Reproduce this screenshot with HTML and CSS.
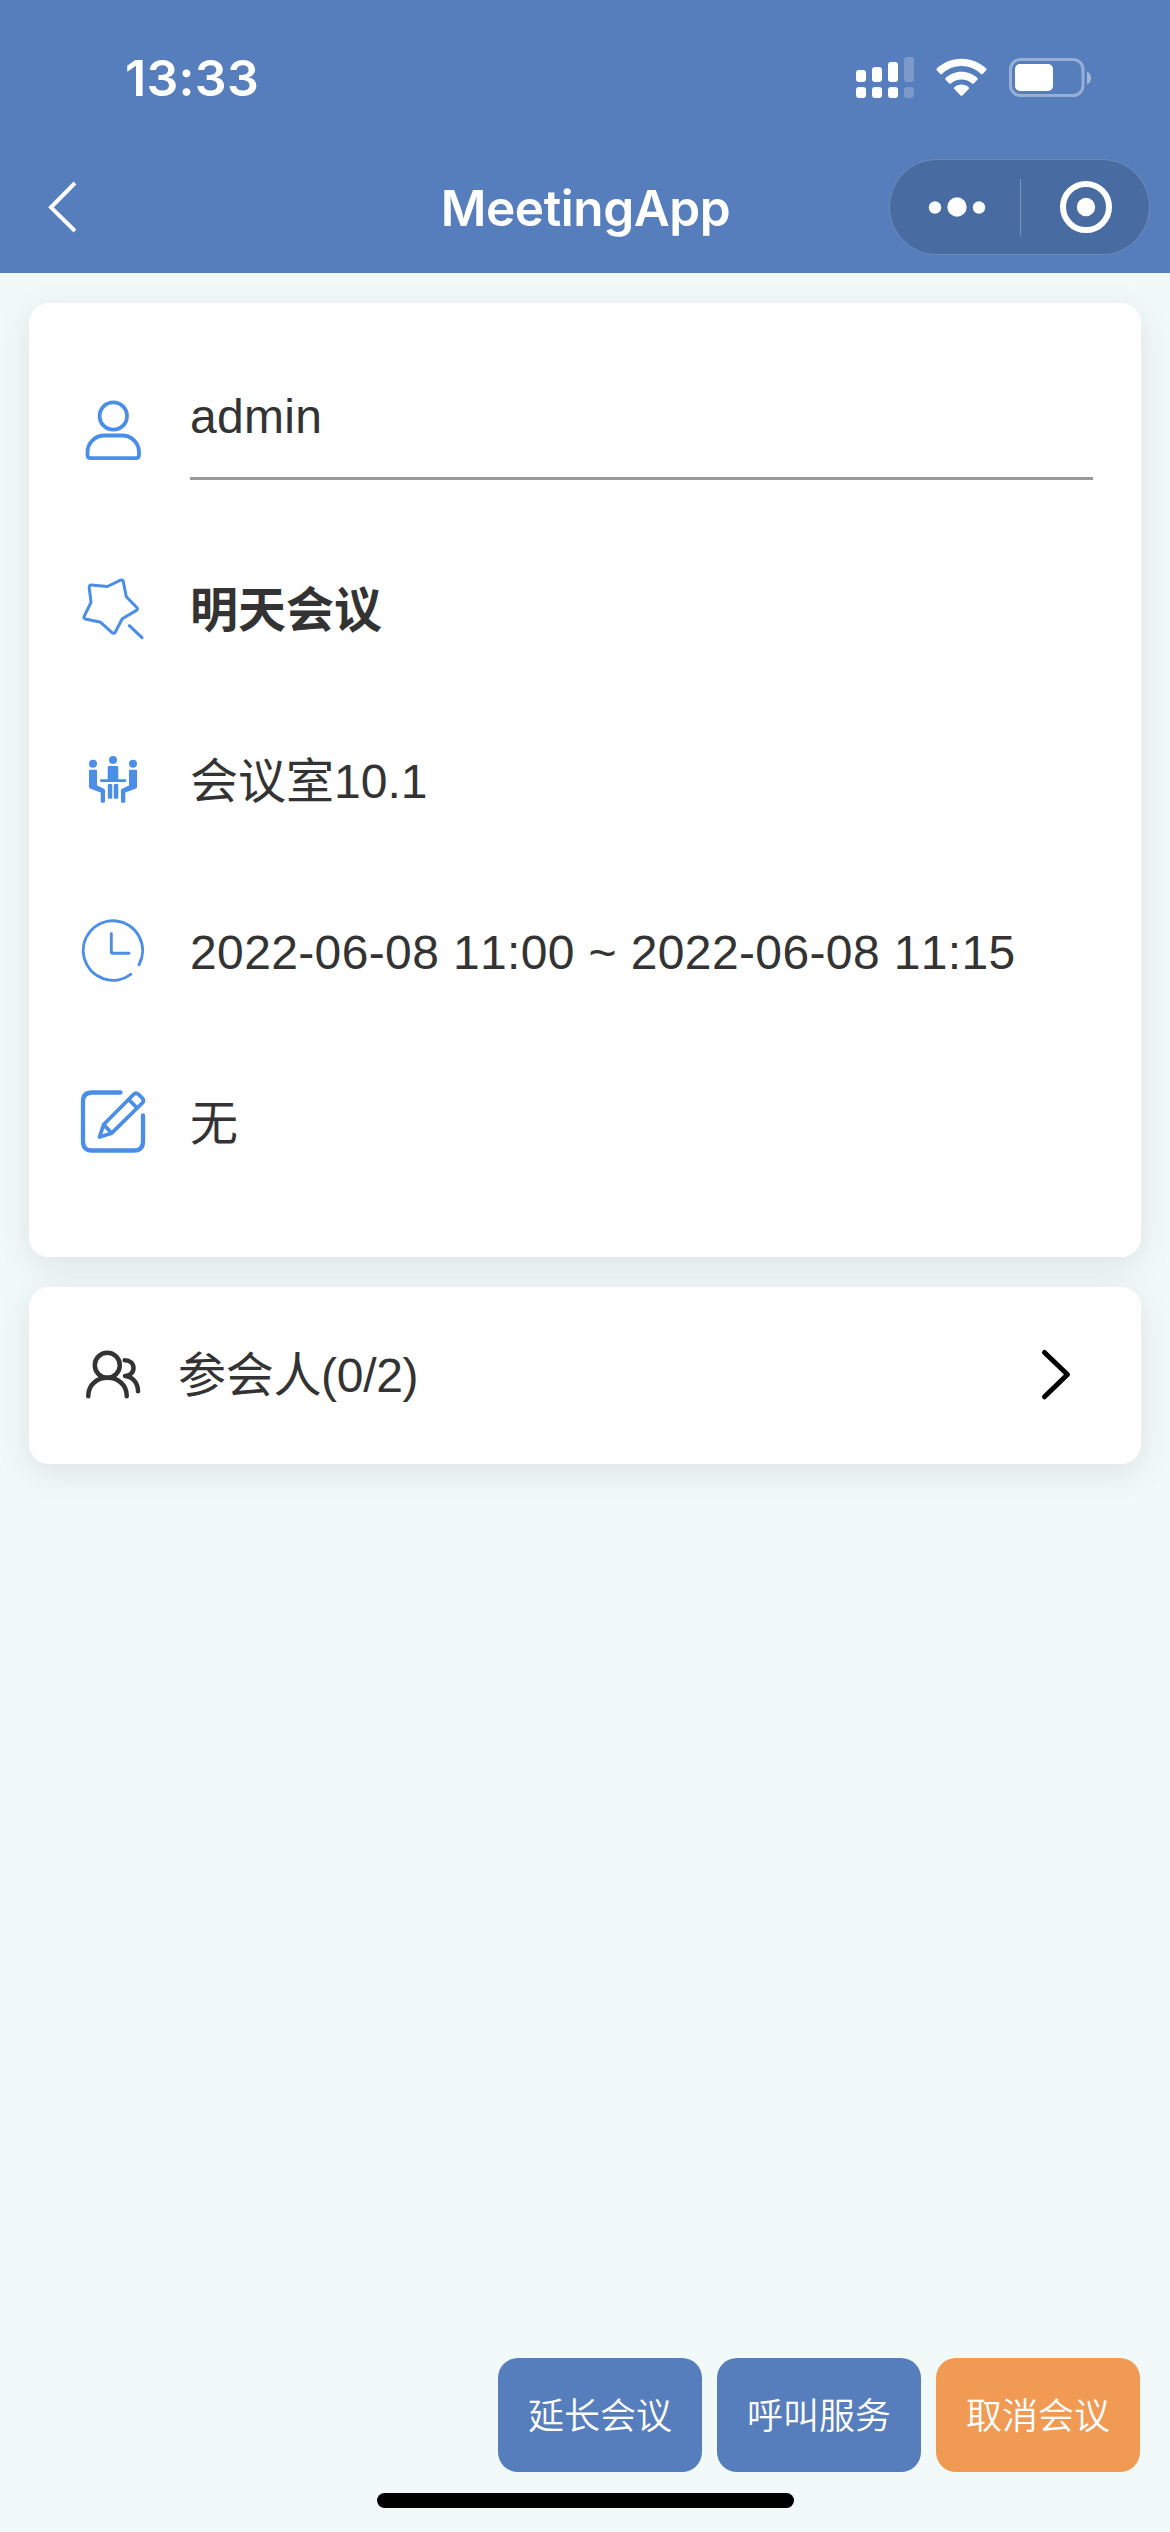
FILE: index.html
```html
<!DOCTYPE html>
<html lang="zh-CN">
<head>
<meta charset="utf-8">
<title>MeetingApp</title>
<link rel="stylesheet" href="styles.css">
</head>
<body>
<div class="screen">
  <header class="header">
    <div class="status">
      <span class="time">13:33</span>
      <svg class="status-icons" width="236" height="48" viewBox="856 54 236 48" fill="#fff">
        <rect x="856" y="70" width="10" height="12" rx="3"/>
        <rect x="872" y="67" width="10" height="15" rx="3"/>
        <rect x="888" y="62" width="10" height="20" rx="3"/>
        <rect x="904" y="57" width="10" height="25" rx="3" opacity=".22"/>
        <rect x="856" y="87" width="10" height="11" rx="3"/>
        <rect x="872" y="87" width="10" height="11" rx="3"/>
        <rect x="888" y="87" width="10" height="11" rx="3"/>
        <rect x="904" y="87" width="10" height="11" rx="3" opacity=".22"/>
        <path d="M961.5 58.7c9.500 0 18.200 3.700 24.700 9.700q.9.900 0 1.900l-3.300 3.500q-1 1-2 .1c-5.200-4.900-12-7.800-19.400-7.800s-14.200 2.900-19.400 7.800q-1 .9-2-.1l-3.300-3.500q-.9-1 0-1.900c6.500-6 15.200-9.700 24.700-9.700z"/>
        <path d="M961.500 71.700c6.100 0 11.700 2.400 15.900 6.200q.9.900 0 1.900l-3.400 3.500q-1 1-2 .1c-2.800-2.500-6.500-4-10.500-4s-7.700 1.500-10.500 4q-1 .9-2-.1l-3.400-3.500q-.9-1 0-1.900c4.200-3.800 9.800-6.200 15.900-6.200z"/>
        <path d="M961.500 84.500c2.800 0 5.300 1 7.200 2.700q.9.900 0 1.900l-6.300 6.400q-.9.900-1.800 0l-6.300-6.400q-.9-1 0-1.900c1.900-1.700 4.400-2.700 7.200-2.700z"/>
        <rect x="1010.500" y="59.500" width="72.500" height="36" rx="10" fill="none" stroke="#fff" stroke-width="3" opacity=".38"/>
        <rect x="1015" y="64" width="38" height="27" rx="5"/>
        <path d="M1087 71.500q4 2 4 6.500t-4 6.500z" opacity=".45"/>
      </svg>
    </div>
    <nav class="nav">
      <svg class="back" width="40" height="60" viewBox="42 177 40 60" fill="none" stroke="#fff" stroke-width="4"><path d="M75 183 51 207.300 75 231"/></svg>
      <h1 class="title">MeetingApp</h1>
      <div class="capsule">
        <svg class="dots" width="58" height="24" viewBox="0 0 58 24" fill="#fff"><circle cx="7" cy="12.500" r="6.200"/><circle cx="29" cy="12" r="9.700"/><circle cx="51" cy="12.500" r="6.200"/></svg>
        <span class="divider"></span>
        <svg class="ring" width="54" height="54" viewBox="0 0 54 54"><circle cx="27" cy="27" r="23" fill="none" stroke="#fff" stroke-width="6"/><circle cx="27" cy="27" r="9.200" fill="#fff"/></svg>
      </div>
    </nav>
  </header>

  <main class="content">
    <section class="card details">
      <div class="row">
        <svg class="icon" viewBox="0 0 80 80" stroke-width="3.800"><circle cx="40.300" cy="17" r="13.700"/><path d="M31.500 36.500H49C58.500 36.500 66 44 66 53.500V56q0 3.200-3.200 3.200H17.700q-3.200 0-3.200-3.200V53.500C14.500 44 22 36.500 31.500 36.500z"/></svg>
        <div class="field">admin</div>
      </div>
      <div class="row">
        <svg class="icon" viewBox="0 0 80 80" stroke-width="3"><path d="M18.500 15.100 34.300 16.500 47.600 10.200Q49.800 9.300 50.300 11.600L53.300 26.700 63.800 37.500Q65.400 39.200 63.400 40.400L49.300 48.700 42.300 62Q41 64.300 39 62.700L27.700 52.300 12.500 49Q10.300 48.300 11.200 46.300L18 32.300 16.200 17.500Q16.100 14.900 18.500 15.100zM56.300 55.700 69 67.700"/></svg>
        <div class="value strong">明天会议</div>
      </div>
      <div class="row">
        <svg class="icon solid" viewBox="0 0 80 80">
          <circle cx="20" cy="22.700" r="4"/><circle cx="40" cy="19" r="4"/><circle cx="60" cy="22.700" r="4"/>
          <path d="M17 28.800h6q1 0 1 1V44.500l7 3.200q1 .5 1 1.600V60.500q0 1.300-1.300 1.300h-1.700q-1.300 0-1.300-1.300V51.500L17 47.400q-1-.4-1-1.400V29.800q0-1 1-1z"/>
          <path d="M63 28.800h-6q-1 0-1 1V44.500l-7 3.200q-1 .5-1 1.600V60.500q0 1.300 1.300 1.300h1.700q1.300 0 1.300-1.300V51.500L63 47.400q1-.4 1-1.400V29.800q0-1-1-1z"/>
          <path d="M36 25h8q1.300 0 1.300 1.300V38.200h7q1 0 1 1.400t-1 1.400H28q-1 0-1-1.400t1-1.400h6.700V26.300q0-1.300 1.300-1.300z"/>
          <rect x="34.800" y="43" width="4.500" height="14.700" rx="1"/><rect x="40.800" y="43" width="4.500" height="14.700" rx="1"/>
        </svg>
        <div class="value">会议室10.1</div>
      </div>
      <div class="row">
        <svg class="icon" viewBox="0 0 80 80" stroke-width="2.900"><path d="M57.700 62.300A29.700 29.700 0 1 1 66 52.700M38.300 21.700V40.300q0 1 1 1H56"/></svg>
        <div class="value time-range">2022-06-08 11:00 ~ 2022-06-08 11:15</div>
      </div>
      <div class="row">
        <svg class="icon" viewBox="0 0 80 80" stroke-width="4.300"><path d="M47.500 9.500H19Q10 9.500 10 18.500V58.500Q10 67.500 19 67.500H61Q70 67.500 70 58.500V32.500"/><path stroke-width="3.800" d="M26.500 54 30.700 41.500 60.500 11.500Q63 9 65.500 11.300L69.300 15Q71.600 17.500 69.300 20L38.700 50.200zM30.700 41.500 38.700 50.200M55.700 16.500 64 24.800"/></svg>
        <div class="value">无</div>
      </div>
    </section>

    <section class="card people">
      <svg class="icon dark" viewBox="0 0 80 80" stroke-width="4.500"><circle cx="34.300" cy="29.300" r="12.500"/><path d="M15.300 60.300V59.500C15.300 49 23.800 41.800 34.500 41.800S53.700 49 53.700 59.500V60.300"/><path d="M51.700 24.200C57 24.200 60.500 27.500 60.500 32S57 40 52 40C60 40.800 65 47 65 55.300"/></svg>
      <span class="people-label">参会人(0/2)</span>
      <svg class="chevron" width="36" height="56" viewBox="1038 1347.500 36 56" fill="none" stroke="#000" stroke-width="5" stroke-linecap="round" stroke-linejoin="round"><path d="M1044.500 1352 1067.500 1374 1044.500 1396.300"/></svg>
    </section>
  </main>

  <footer class="footer">
    <div class="actions">
      <button class="btn">延长会议</button>
      <button class="btn">呼叫服务</button>
      <button class="btn warn">取消会议</button>
    </div>
    <div class="home"></div>
  </footer>
</div>
</body>
</html>
```
FILE: styles.css
```css
* { box-sizing: border-box; }
body {
  margin: 0;
  background: #f2faf9;
  color: #333;
  font-family: "Liberation Sans", "Noto Sans CJK SC", sans-serif;
}
.screen {
  width: 1170px;
  height: 2532px;
  display: flex;
  flex-direction: column;
}
.header {
  height: 273px;
  background: #577ebc;
  color: #fff;
  font-family: Inter, sans-serif;
}
.status {
  height: 156px;
  padding: 0 78px 0 125px;
  display: flex;
  align-items: center;
  justify-content: space-between;
}
.time { font-size: 50px; font-weight: 600; line-height: 60px; letter-spacing: .3px; }
.nav {
  height: 102px;
  padding: 0 20px 0 42px;
  display: grid;
  grid-template-columns: 261px 1fr 261px;
  align-items: center;
}
.title {
  margin: 0;
  font-size: 49.5px;
  font-weight: 600;
  line-height: 60px;
  letter-spacing: -.4px;
  text-align: center;
  padding: 1px 21px 0 0;
}
.capsule {
  height: 96px;
  border: 1px solid rgba(255, 255, 255, .2);
  border-radius: 48px;
  background: #486ca1;
  display: flex;
  align-items: center;
  padding: 0 36px 0 38px;
  justify-content: space-between;
}
.divider { width: 1px; height: 57px; background: rgba(255, 255, 255, .28); margin-left: -4px; }
.content {
  flex: 1;
  padding: 30px 29px;
  display: flex;
  flex-direction: column;
  gap: 30px;
}
.card {
  background: #fff;
  border-radius: 20px;
  box-shadow: 0 9px 36px rgba(0, 0, 0, .09);
}
.details { height: 954px; padding: 50px 48px 0 44px; }
.row {
  height: 171px;
  display: flex;
  align-items: center;
  gap: 37px;
  font-size: 48px;
  line-height: 72px;
}
.icon {
  width: 80px;
  height: 80px;
  flex: none;
  fill: none;
  stroke: #4a8ee8;
  stroke-linecap: round;
  stroke-linejoin: round;
}
.icon.solid { fill: #4a8ee8; stroke: none; }
.icon.dark { stroke: #333; }
.field {
  flex: 1;
  height: 82px;
  line-height: 37px;
  letter-spacing: .3px;
  border-bottom: 3px solid #999;
}
.value { padding-top: 3px; }
.time-range { font-kerning: none; letter-spacing: .37px; }
.strong { font-weight: 700; }
.people {
  height: 177px;
  padding: 0 67px 0 44px;
  display: flex;
  align-items: center;
  font-size: 48px;
}
.people-label { flex: 1; padding: 0 0 9px 25px; letter-spacing: -.3px; }
.footer {
  height: 174px;
  display: flex;
  flex-direction: column;
  align-items: center;
  gap: 21px;
}
.actions {
  align-self: flex-end;
  display: flex;
  gap: 15px;
  padding-right: 30px;
}
.btn {
  width: 204px;
  height: 114px;
  padding: 0 0 5px;
  border: 0;
  border-radius: 20px;
  background: #577ebc;
  color: #fff;
  font: 350 36px "Noto Sans CJK SC", sans-serif;
}
.btn.warn { background: #f09a54; }
.home { width: 417px; height: 15px; border-radius: 8px; background: #000; }
```
